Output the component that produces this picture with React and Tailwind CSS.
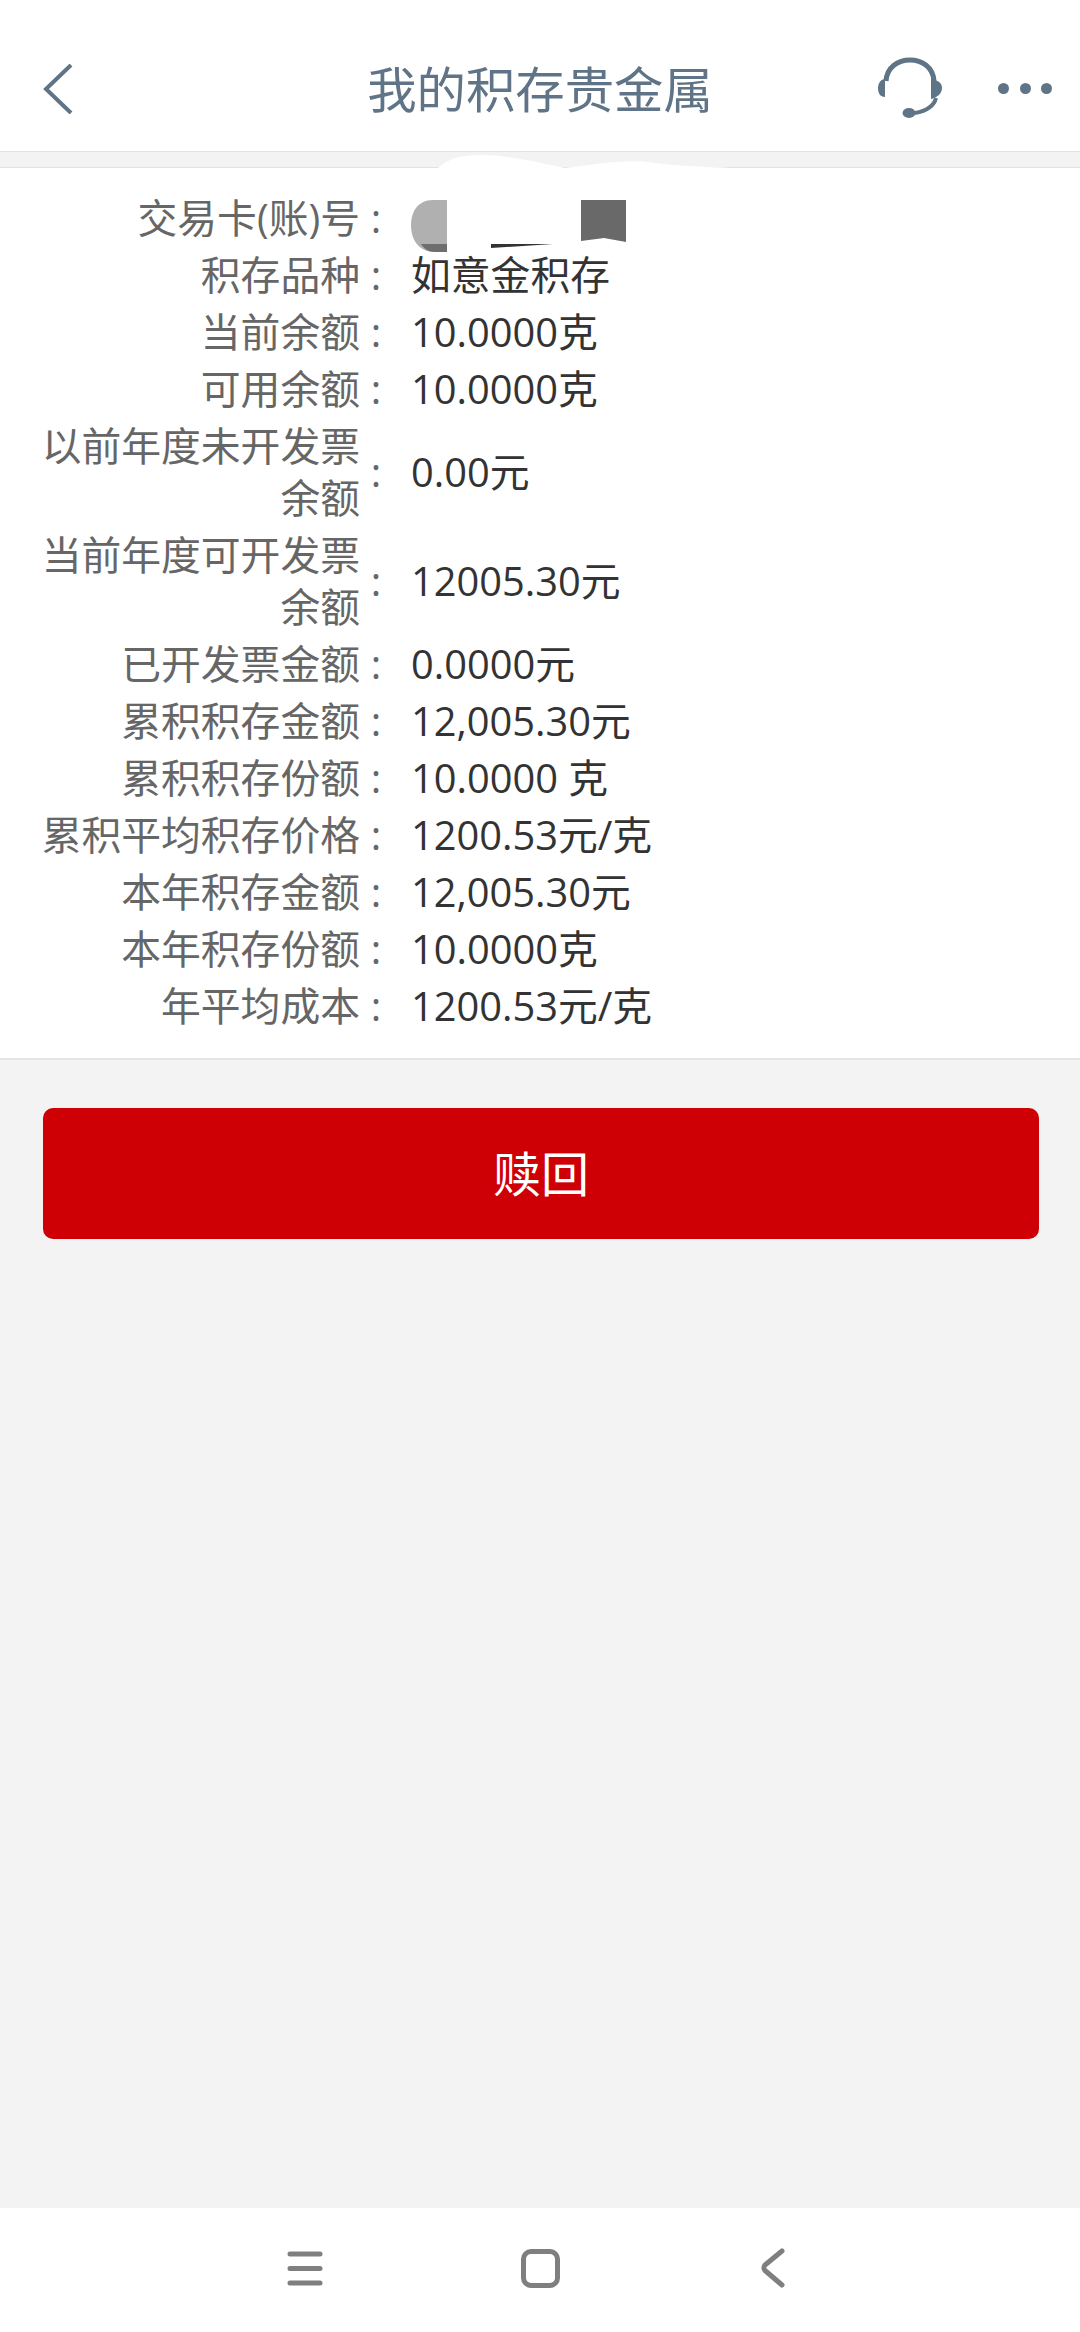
const rows = [
  { label: "交易卡(账)号", value: null },
  { label: "积存品种", value: "如意金积存" },
  { label: "当前余额", value: "10.0000克" },
  { label: "可用余额", value: "10.0000克" },
  { label: "以前年度未开发票余额", value: "0.00元" },
  { label: "当前年度可开发票余额", value: "12005.30元" },
  { label: "已开发票金额", value: "0.0000元" },
  { label: "累积积存金额", value: "12,005.30元" },
  { label: "累积积存份额", value: "10.0000 克" },
  { label: "累积平均积存价格", value: "1200.53元/克" },
  { label: "本年积存金额", value: "12,005.30元" },
  { label: "本年积存份额", value: "10.0000克" },
  { label: "年平均成本", value: "1200.53元/克" },
];

// the card number is scribbled out in the screenshot, only these bits show
const RedactedNumber = () => (
  <svg width="220" height="52" viewBox="0 0 220 52" className="block overflow-visible">
    <g transform="translate(0 7)">
      <path d="M36 1H22C6 1 0 14 0 26C0 40 7 53 24 53H36Z" fill="#b0b0b0" />
      <path d="M10 45H36V53H24C18 53 13 50 10 45Z" fill="#6e6e6e" />
      <path d="M80 45L142 45L80 49Z" fill="#333333" />
      <path d="M170 1H215V43L193 39L170 42Z" fill="#696969" />
    </g>
  </svg>
);

const Row = ({ label, value }) => (
  <div className="flex items-center py-[2.5px] leading-[52px]">
    <div className="w-[320px] shrink-0 text-right text-[#666666]">{label}</div>
    <div className="w-[32px] shrink-0 text-center text-[#666666]">:</div>
    <div className="ml-[19px] text-[#333333]">{value ?? <RedactedNumber />}</div>
  </div>
);

export default function App() {
  return (
    <div className="relative flex h-[2332px] w-[1080px] flex-col overflow-hidden bg-[#f3f3f4] font-['Open_Sans','Noto_Sans_CJK_SC',sans-serif]">
      <header className="flex h-[151px] shrink-0 items-center bg-white pt-[26px] pl-[28px] pr-[28px]">
        <div className="flex-1">
          <svg width="30" height="50" viewBox="0 0 30 50" fill="none" stroke="#5f7486" strokeWidth="4" className="ml-[15px] block">
            <path d="M28 1L3 25L28 49" />
          </svg>
        </div>
        <h1 className="text-[49.4px] font-normal leading-none text-[#5f7486]">我的积存贵金属</h1>
        <div className="flex flex-1 items-center justify-end gap-[54px]">
          <svg width="66" height="64" viewBox="0 0 66 64" fill="none" className="block">
            <path d="M8 24C9 10 20 3 32 3C44 3 55 10 56 24" stroke="#5f7486" strokeWidth="5" />
            <path d="M7 22V40C2 40 0 36 0 31C0 26 3 22 7 22Z" fill="#5f7486" />
            <path d="M53 22C60 23 64 26 64 31C64 36 60 40 53 42Z" fill="#5f7486" />
            <path d="M58 41C56 49 48 54 37 56" stroke="#5f7486" strokeWidth="4" />
            <ellipse cx="31" cy="56" rx="6.500" ry="5" fill="#5f7486" />
          </svg>
          <div className="flex gap-[10.5px]">
            <span className="h-[11px] w-[11px] rounded-full bg-[#5f7486]" />
            <span className="h-[11px] w-[11px] rounded-full bg-[#5f7486]" />
            <span className="h-[11px] w-[11px] rounded-full bg-[#5f7486]" />
          </div>
        </div>
      </header>

      <div className="h-[17px] shrink-0 border-y border-[#e2e2e2] bg-[#f3f3f4]" />

      <main className="shrink-0 border-b-2 border-[#e4e4e4] bg-white pl-[40px] pt-[21px] pb-[24px] text-[39.8px]">
        {rows.map((row) => (
          <Row key={row.label} label={row.label} value={row.value} />
        ))}
      </main>

      {/* white scribble running up over the grey band */}
      <svg width="300" height="40" viewBox="0 0 300 40" className="absolute left-[430px] top-[148px]">
        <path d="M8 20C20 8 40 5 70 8C95 11 115 16 135 20C160 17 200 10 225 15C250 18 280 19 300 20V40H8Z" fill="#ffffff" />
      </svg>

      <div className="px-[43px] pt-[48px]">
        <button className="h-[131px] w-[996px] rounded-[10px] bg-[#cf0005] text-[48px] text-white">赎回</button>
      </div>

      <nav className="mt-auto grid h-[124px] grid-cols-3 items-center bg-white pb-[4px]">
        <div className="flex justify-end pr-[37px]">
          <svg width="36" height="35" viewBox="0 0 36 35" fill="none" stroke="#7f7f7f" strokeWidth="5" strokeLinecap="round" className="block">
            <path d="M3 3H33M3 17.5H33M3 32H33" />
          </svg>
        </div>
        <div className="flex justify-center">
          <div className="h-[39px] w-[39px] rounded-[10px] border-[5px] border-[#7f7f7f]" />
        </div>
        <div className="flex pl-[41px]">
          <svg width="24" height="40" viewBox="0 0 24 40" fill="none" stroke="#7f7f7f" strokeWidth="5" strokeLinecap="round" strokeLinejoin="round" className="block">
            <path d="M21 3L4 17C2.500 18.500 2.500 21 4 22.500L21 37" />
          </svg>
        </div>
      </nav>
    </div>
  );
}
